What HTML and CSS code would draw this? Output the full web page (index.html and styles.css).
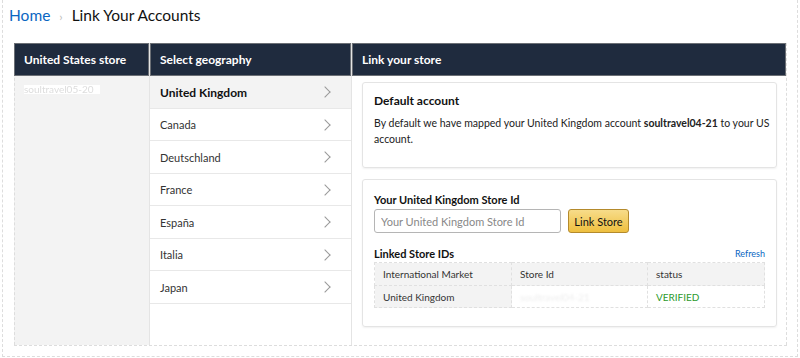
FILE: index.html
```html
<!DOCTYPE html>
<html lang="en">
<head>
    <meta charset="UTF-8">
    <meta name="viewport" content="width=device-width, initial-scale=1.0">
    <title>Link Your Accounts</title>
    <link rel="stylesheet" href="styles.css">
</head>
<body>
    <div class="page">
        <div class="crumbs">
            <a href="#">Home</a>
            <span class="sep">›</span>
            <span class="current">Link Your Accounts</span>
        </div>
        <div class="link-table">
            <div class="col col-us">
                <div class="col-head">United States store</div>
                <div class="col-body">
                    <div class="us-id"><span>soultravel05-20</span></div>
                </div>
            </div>
            <div class="col col-geo">
                <div class="col-head">Select geography</div>
                <div class="col-body">
                    <div class="geo-item active">United Kingdom <span class="chev"></span></div>
                    <div class="geo-item">Canada <span class="chev"></span></div>
                    <div class="geo-item">Deutschland <span class="chev"></span></div>
                    <div class="geo-item">France <span class="chev"></span></div>
                    <div class="geo-item">España <span class="chev"></span></div>
                    <div class="geo-item">Italia <span class="chev"></span></div>
                    <div class="geo-item">Japan <span class="chev"></span></div>
                </div>
            </div>
            <div class="col col-link">
                <div class="col-head">Link your store</div>
                <div class="col-body">
                    <div class="box">
                        <h3>Default account</h3>
                        <p>By default we have mapped your United Kingdom account <b>soultravel04-21</b> to your US account.</p>
                    </div>
                    <div class="box box-form">
                        <label for="storeId">Your United Kingdom Store Id</label>
                        <div class="form-row">
                            <input type="text" id="storeId" placeholder="Your United Kingdom Store Id">
                            <button type="button">Link Store</button>
                        </div>
                        <div class="linked-head">
                            <span>Linked Store IDs</span>
                            <a href="#">Refresh</a>
                        </div>
                        <table class="linked">
                            <tr>
                                <th>International Market</th>
                                <th>Store Id</th>
                                <th>status</th>
                            </tr>
                            <tr>
                                <td>United Kingdom</td>
                                <td class="hidden-id"><span>soultravel04-21</span></td>
                                <td class="ok">VERIFIED</td>
                            </tr>
                        </table>
                    </div>
                </div>
            </div>
        </div>
    </div>
</body>
</html>
```

FILE: styles.css
```css
body {
    margin: 0;
    font-family: Lato, "Noto Sans", Arial, sans-serif;
    color: #111;
    background-color: #fff;
}
.page {
    height: 357px;
    margin: 0 2px 0 2px;
    border: 1px dashed #ddd;
    border-top: none;
    box-sizing: border-box;
    padding: 0 10px;
}
.crumbs {
    height: 43px;
    padding: 3px 0 0 0;
    margin-left: -4px;
    box-sizing: border-box;
    font-size: 15.5px;
    line-height: 24px;
}
.crumbs a {
    color: #0a66c2;
    text-decoration: none;
}
.crumbs .sep {
    color: #bbb;
    font-size: 12px;
    margin: 0 5px 0 5px;
}
.crumbs .current {
    color: #111;
}
.link-table {
    display: flex;
    height: 302px;
    margin-left: 1px;
    border-bottom: 1px dashed #ddd;
}
.col {
    display: flex;
    flex-direction: column;
}
.col-us {
    width: 134px;
    background-color: #f3f3f3;
    border-left: 1px dashed #ddd;
}
.col-geo {
    width: 201px;
    background-color: #fff;
    border-left: 1px solid #e4e4e4;
}
.col-link {
    flex: 1;
    background-color: #fff;
    border-left: 1px solid #e4e4e4;
    border-right: 1px dashed #ddd;
}
.col-head {
    height: 33px;
    background-color: #1f2b3e;
    border: 1px solid #6b6f75;
    box-sizing: border-box;
    color: #fff;
    font-weight: bold;
    font-size: 12px;
    line-height: 31px;
    padding-left: 9px;
}
.col-us .col-head {
    margin-left: -1px;
}
.col-body {
    flex: 1;
}
.us-id {
    padding: 6px 0 0 9px;
    line-height: 9px;
}
.us-id span {
    display: inline-block;
    background-color: #fff;
    color: #ddd;
    font-size: 10px;
    line-height: 9px;
    padding-right: 6px;
    filter: blur(0.6px);
}
.geo-item {
    display: flex;
    justify-content: space-between;
    align-items: center;
    height: 33px;
    padding: 0 20px 0 10px;
    border-bottom: 1px solid #e8e8e8;
    box-sizing: border-box;
    font-size: 11px;
    color: #333;
}
.geo-item:nth-child(even) {
    height: 32px;
}
.geo-item.active {
    background-color: #f3f3f3;
    font-weight: bold;
    font-size: 12px;
    color: #111;
}
.chev {
    width: 7px;
    height: 7px;
    border-top: 1px solid #999;
    border-right: 1px solid #999;
    transform: rotate(45deg);
    margin-right: 2px;
}
.col-link .col-body {
    padding: 6px 9px 0 10px;
}
.box {
    border: 1px solid #e4e4e4;
    border-radius: 3px;
    box-shadow: 0 1px 2px rgba(0,0,0,0.06);
    padding: 0 11px;
}
.box h3 {
    font-size: 12px;
    margin: 10px 0 7px 0;
}
.box p {
    font-size: 10.5px;
    line-height: 16px;
    margin: 0 -8px 20px 0;
    color: #222;
}
.box-form {
    margin-top: 11px;
    height: 148px;
    box-sizing: border-box;
    padding-top: 13px;
}
.box-form label {
    display: block;
    font-size: 11px;
    font-weight: bold;
    line-height: 14px;
    margin-bottom: 2px;
}
.form-row {
    display: flex;
    gap: 7px;
}
.form-row input {
    width: 187px;
    height: 24px;
    border: 1px solid #b5b5b5;
    border-radius: 3px;
    box-sizing: border-box;
    padding: 0 6px;
    font-family: inherit;
    font-size: 11px;
}
.form-row input::placeholder {
    color: #888;
}
.form-row button {
    width: 61px;
    height: 24px;
    padding: 0;
    white-space: nowrap;
    background: linear-gradient(#f7dc8a, #eebf3f);
    border: 1px solid #b48a2c;
    border-radius: 3px;
    font-family: inherit;
    font-size: 11px;
    color: #111;
    cursor: pointer;
}
.linked-head {
    display: flex;
    justify-content: space-between;
    align-items: flex-end;
    margin-top: 14px;
    font-size: 11px;
    line-height: 14px;
    font-weight: bold;
}
.linked-head a {
    font-weight: normal;
    font-size: 9px;
    color: #0a66c2;
    text-decoration: none;
}
.linked {
    width: 100%;
    border-collapse: collapse;
    margin-top: 1px;
    font-size: 10px;
}
.linked th, .linked td {
    text-align: left;
    font-weight: normal;
    height: 23px;
    line-height: 12px;
    padding: 0 8px;
    border: 1px dashed #e0e0e0;
    color: #333;
    box-sizing: border-box;
}
.linked td {
    height: 22px;
}
.linked th {
    background-color: #f3f3f3;
}
.linked th:nth-child(1) {
    width: 137px;
}
.linked th:nth-child(2) {
    width: 136px;
}
.linked td:first-child {
    background-color: #f3f3f3;
}
.linked .hidden-id span {
    color: #eee;
    filter: blur(1px);
}
.linked .ok {
    color: #2c9a2c;
}
```
